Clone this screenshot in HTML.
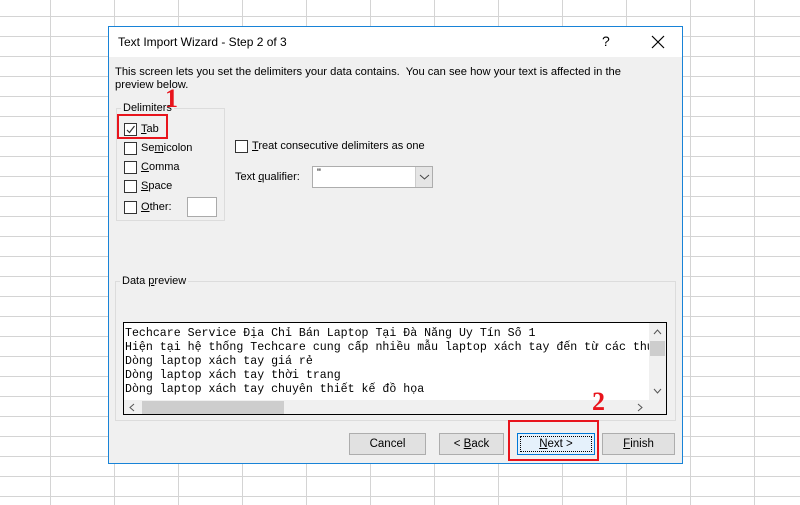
<!DOCTYPE html>
<html><head><style>
*{margin:0;padding:0;box-sizing:border-box}
body{width:800px;height:505px;overflow:hidden;position:relative;font-family:"Liberation Sans",sans-serif;font-size:11px;color:#000;
background-color:#fff;
background-image:linear-gradient(to right,#d4d4d4 1px,transparent 1px),linear-gradient(to bottom,#d4d4d4 1px,transparent 1px);
background-size:64px 20px;background-position:50px 16px;}
.a{position:absolute}
.dlg{left:108px;top:26px;width:575px;height:438px;border:1px solid #1883d7;background:#f0f0f0}
.title{left:0;top:0;width:573px;height:30px;background:#fff}
.cb{width:13px;height:13px;border:1px solid #333;background:#fff}
.btn{height:22px;border:1px solid #adadad;background:#e1e1e1;text-align:center;line-height:20px;font-size:11.5px}
.grp{border:1px solid #dcdcdc}
.mono{font-family:"Liberation Mono",monospace;font-size:11.6px;line-height:14px;white-space:pre}
.red{border:2px solid #e8141c}
.num{font-family:"Liberation Serif",serif;font-weight:bold;color:#e8141c;font-size:26px}
u{text-decoration:underline}
</style></head><body>
<div class="a dlg">
 <div class="a title">
  <div class="a" style="left:9px;top:8px;font-size:12px">Text Import Wizard - Step 2 of 3</div>
  <div class="a" style="left:493px;top:6px;font-size:14px">?</div>
  <svg class="a" style="left:542px;top:8px" width="14" height="14"><path d="M1 1L13 13M13 1L1 13" stroke="#000" stroke-width="1.2"/></svg>
 </div>
 <div class="a" style="left:6px;top:39px;line-height:13px;width:525px;font-size:11.2px">This screen lets you set the delimiters your data contains.&nbsp; You can see how your text is affected in the preview below.</div>
 <div class="a grp" style="left:7px;top:81px;width:109px;height:113px"></div>
 <div class="a" style="left:12px;top:75px;background:#f0f0f0;padding:0 2px">Delimiters</div>
 <div class="a cb" style="left:15px;top:96px"><svg width="11" height="11" style="display:block"><path d="M2 6L4.5 8.5L9.5 2" stroke="#333" fill="none" stroke-width="1.2"/></svg></div>
 <div class="a" style="left:32px;top:96px"><u>T</u>ab</div>
 <div class="a cb" style="left:15px;top:115px"></div><div class="a" style="left:32px;top:115px">Se<u>m</u>icolon</div>
 <div class="a cb" style="left:15px;top:134px"></div><div class="a" style="left:32px;top:134px"><u>C</u>omma</div>
 <div class="a cb" style="left:15px;top:153px"></div><div class="a" style="left:32px;top:153px"><u>S</u>pace</div>
 <div class="a cb" style="left:15px;top:174px"></div><div class="a" style="left:32px;top:174px"><u>O</u>ther:</div>
 <div class="a" style="left:78px;top:170px;width:30px;height:20px;border:1px solid #aaa;background:#fff"></div>
 <div class="a cb" style="left:126px;top:113px"></div><div class="a" style="left:143px;top:113px"><u>T</u>reat consecutive delimiters as one</div>
 <div class="a" style="left:126px;top:144px">Text <u>q</u>ualifier:</div>
 <div class="a" style="left:203px;top:139px;width:121px;height:22px;border:1px solid #adadad;background:#fff">
  <div class="a" style="left:4px;top:0;font-size:11px">"</div>
  <div class="a" style="left:102px;top:0;width:17px;height:20px;background:#e5e5e5;border-left:1px solid #ccc"><svg width="17" height="20"><path d="M4 8L8.5 12L13 8" stroke="#444" fill="none"/></svg></div>
 </div>
 <div class="a grp" style="left:6px;top:254px;width:561px;height:140px"></div>
 <div class="a" style="left:11px;top:248px;background:#f0f0f0;padding:0 2px">Data <u>p</u>review</div>
 <div class="a" style="left:14px;top:295px;width:544px;height:93px;border:1px solid #000;background:#fff;overflow:hidden">
  <div class="a mono" style="left:1px;top:4px;width:525px;overflow:hidden">Techcare Service Địa Chỉ Bán Laptop Tại Đà Nẵng Uy Tín Số 1
Hiện tại hệ thống Techcare cung cấp nhiều mẫu laptop xách tay đến từ các thương hiệu
Dòng laptop xách tay giá rẻ
Dòng laptop xách tay thời trang
Dòng laptop xách tay chuyên thiết kế đồ họa</div>
  <div class="a" style="left:525px;top:0;width:17px;height:77px;background:#f0f0f0">
   <svg class="a" style="left:0;top:4px" width="17" height="10"><path d="M5 7L8.5 3L12 7" stroke="#555" fill="none"/></svg>
   <div class="a" style="left:1px;top:18px;width:15px;height:15px;background:#cdcdcd"></div>
   <svg class="a" style="left:0;top:63px" width="17" height="10"><path d="M5 3L8.5 7L12 3" stroke="#555" fill="none"/></svg>
  </div>
  <div class="a" style="left:0;top:77px;width:542px;height:15px;background:#f0f0f0">
   <svg class="a" style="left:2px;top:0" width="12" height="15"><path d="M8 4L4 7.5L8 11" stroke="#555" fill="none"/></svg>
   <div class="a" style="left:18px;top:1px;width:142px;height:13px;background:#cdcdcd"></div>
   <svg class="a" style="left:510px;top:0" width="12" height="15"><path d="M4 4L8 7.5L4 11" stroke="#555" fill="none"/></svg>
  </div>
 </div>
 <div class="a btn" style="left:240px;top:406px;width:77px">Cancel</div>
 <div class="a btn" style="left:330px;top:406px;width:65px">&lt; <u>B</u>ack</div>
 <div class="a btn" style="left:408px;top:406px;width:78px;border:1px solid #0078d7;background:#e5f1fb"><div style="margin:2px;border:1px dotted #000;line-height:14px;height:16px"><u>N</u>ext &gt;</div></div>
 <div class="a btn" style="left:493px;top:406px;width:73px"><u>F</u>inish</div>
</div>
<div class="a red" style="left:117px;top:114px;width:51px;height:25px"></div>
<div class="a num" style="left:165px;top:84px">1</div>
<div class="a red" style="left:508px;top:420px;width:91px;height:41px"></div>
<div class="a num" style="left:592px;top:387px">2</div>
</body></html>
